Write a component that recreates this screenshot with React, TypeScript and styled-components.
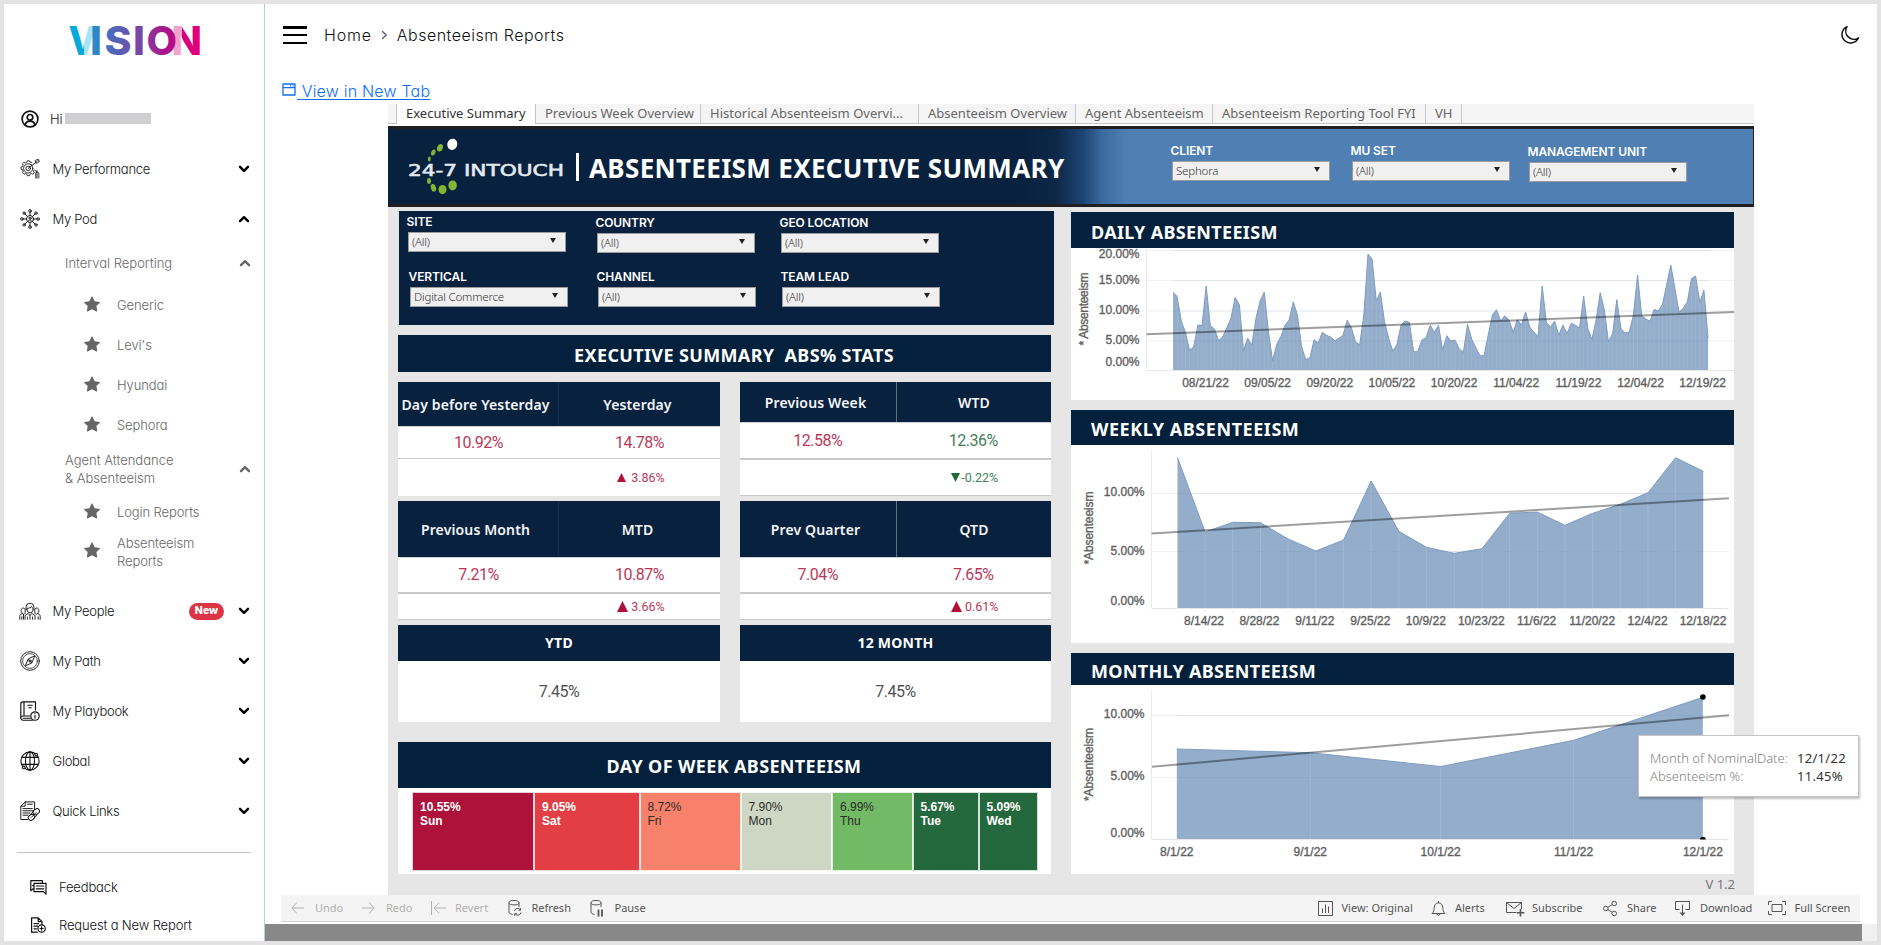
import React from 'react';
import styled, { createGlobalStyle, css } from 'styled-components';

const NAVY = '#08213e';
const DEEP = '#03213c';
const RED = '#b0103a';
const GREEN = '#24693d';
const UI = '"Inter", "Liberation Sans", sans-serif';
const BOOK = '"Noto Sans", "Liberation Sans", sans-serif';
const ARIAL = '"Liberation Sans", Arial, sans-serif';

const GlobalStyle = createGlobalStyle`
  * { box-sizing: border-box; }
  body { margin: 0; background: #e3e3e3; font-family: ${UI}; color: #111; }
`;

/* ---------- page frame ---------- */

const Frame = styled.div`
  display: flex;
  width: 1881px;
  height: 945px;
  border: 4px solid #e3e3e3;
  background: #fff;
  overflow: hidden;
`;

const Sidebar = styled.aside`
  flex: none;
  width: 261px;
  border-right: 1px solid #a5d6e0;
  font-feature-settings: 'cv11';
  font-size: 13px;
  font-weight: 350;
`;

const Main = styled.main`
  flex: 1;
  display: flex;
  flex-direction: column;
  min-width: 0;
`;

/* ---------- sidebar ---------- */

const LogoBox = styled.div`
  height: 90px;
  padding: 10px 0 0 61px;
  svg { display: block; overflow: visible; }
`;

const UserRow = styled.div`
  display: flex;
  align-items: center;
  height: 50px;
  padding-left: 17px;
  svg { margin-right: 11px; }
`;

const Mask = styled.span`
  width: 86px;
  height: 11px;
  margin: -1px 0 0 2px;
  background: #cfcfd1;
`;

const NavRow = styled.div`
  display: flex;
  align-items: center;
  height: 50px;
  padding: 0 14px 0 16px;
`;

const NavLabel = styled.span`
  flex: 1;
  margin-left: 12.5px;
  letter-spacing: -0.28px;
`;

const Badge = styled.span`
  width: 35px;
  height: 17px;
  margin-right: 14px;
  border-radius: 9px;
  background: #dc3545;
  color: #fff;
  font-size: 10.5px;
  font-weight: 800;
  line-height: 16px;
  text-align: center;
`;

const SubRow = styled.div<{ $h: number; $lift?: number }>`
  display: flex;
  align-items: center;
  height: ${p => p.$h}px;
  padding: 0 13px ${p => p.$lift ?? 0}px 61px;
  color: #686868;
  font-weight: 300;
  line-height: 18px;
  span { flex: 1; white-space: pre-line; letter-spacing: 0; }
`;

const LeafRow = styled.div<{ $h?: number; $lift?: number }>`
  display: flex;
  align-items: center;
  height: ${p => p.$h ?? 40}px;
  padding: 0 0 ${p => p.$lift ?? 0}px 80px;
  color: #686868;
  font-weight: 300;
  line-height: 18px;
  letter-spacing: -0.1px;
  white-space: pre-line;
  svg { flex: none; margin: -3px 17px 0 0; }
`;

const Divider = styled.hr`
  width: 234px;
  margin: 16px 0 15px 13px;
  border: 0;
  border-top: 1px solid #c4c4c4;
`;

const FootRow = styled.div`
  display: flex;
  align-items: center;
  height: 38px;
  padding-left: 26px;
  letter-spacing: -0.15px;
  svg { margin-right: 12px; }
`;

/* ---------- main header ---------- */

const TopBar = styled.header`
  display: flex;
  align-items: center;
  height: 62px;
  padding: 0 17px 0 18px;
  font-size: 16px;
  font-weight: 350;
  font-feature-settings: 'cv11';
`;

const Burger = styled.div`
  display: flex;
  flex-direction: column;
  justify-content: space-between;
  width: 24px;
  height: 18px;
  margin-right: 17px;
  i { height: 2.5px; background: #000; }
`;

const Crumb = styled.span<{ $ls?: number }>`
  letter-spacing: ${p => p.$ls ?? 0.5}px;
`;

const TopFill = styled.div`flex: 1;`;

const LinkRow = styled.a`
  display: flex;
  align-items: center;
  height: 38px;
  padding: 12px 0 0 17px;
  color: #0d6efd;
  font-size: 16px;
  font-weight: 350;
  letter-spacing: 0.2px;
  font-feature-settings: 'cv11';
  svg { margin: -3px 1px 0 0; }
  span { white-space: pre; text-decoration: underline; text-underline-offset: 2px; text-decoration-thickness: 1px; }
`;

/* ---------- dashboard ---------- */

const Dashboard = styled.section`
  position: relative;
  width: 1366px;
  height: 791px;
  margin-left: 123px;
  background: #e6e6e6;
  font-family: ${BOOK};
`;

const Tabs = styled.nav`
  display: flex;
  height: 20px;
  background: #f5f5f5;
  border-bottom: 1px solid #c6c6c6;
`;

const TabLead = styled.div`
  width: 9px;
  border-right: 1px solid #c6c6c6;
`;

const Tab = styled.div<{ $w: number; $active?: boolean }>`
  width: ${p => p.$w}px;
  height: 20px;
  padding-left: 9px;
  border-right: 1px solid #c6c6c6;
  color: #666;
  font-size: 13px;
  line-height: 18px;
  white-space: nowrap;
  ${p => p.$active && css`background: #fff; color: #333;`}
`;

const Banner = styled.div`
  display: flex;
  height: 83px;
  padding-top: 2px;
  background: #fff;
`;

const BannerInner = styled.div`
  display: flex;
  flex: 1;
  border: solid #1f1f22;
  border-width: 3px 1px 3px 0;
  background: linear-gradient(90deg, ${NAVY} 632px, #0d2748 668px, #1d4675 696px, #3c6a9f 714px, #4f7fb3 738px);
`;

const BannerLogo = styled.svg`
  flex: none;
  width: 189px;
  height: 75px;
`;

const BannerTitle = styled.h1`
  display: flex;
  align-items: center;
  width: 594px;
  margin: 0;
  padding-top: 2px;
  color: #fff;
  font-size: 26px;
  font-weight: 700;
  letter-spacing: 0.34px;
  white-space: nowrap;
  &::before { content: ''; width: 3px; height: 28px; margin: -1px 10px 0 -1px; background: #fff; }
`;

const Field = styled.div<{ $w: number; $dx?: number; $dy?: number }>`
  width: ${p => p.$w}px;
  padding: ${p => p.$dy ?? 0}px 0 0 ${p => p.$dx ?? 0}px;
`;

const FieldLabel = styled.div`
  margin-left: -1.5px;
  color: #fff;
  font: 600 12px/14px ${UI};
  letter-spacing: -0.1px;
  white-space: nowrap;
`;

const Select = styled.div`
  display: flex;
  align-items: center;
  justify-content: space-between;
  width: 158px;
  height: 20px;
  margin-top: 3px;
  padding: 0 9px 0 3px;
  border: 1px solid #9c9c9c;
  background: #f0f0f0;
  color: #333;
  font-size: 11.5px;
  font-weight: 350;
  letter-spacing: -0.2px;
  line-height: 18px;
  &::after {
    content: '';
    margin-top: -3px;
    border: solid transparent;
    border-width: 5px 3.5px 0;
    border-top-color: #222;
  }
`;

const BannerFields = styled.div`
  display: flex;
  padding-top: 12px;
`;

const Body = styled.div`
  display: flex;
  gap: 17px;
  padding-left: 10px;
`;

const LeftCol = styled.div`
  width: 656px;
  padding-top: 4px;
`;

const FilterPanel = styled.div`
  height: 114px;
  margin: 0 0 10px 1px;
  padding: 4px 0 0 9px;
  background: ${NAVY};
`;

const FieldRow = styled.div`
  display: flex;
  height: 54.5px;
`;

const SectionBar = styled.h2<{ $h: number; $top: number }>`
  display: flex;
  align-items: center;
  justify-content: center;
  width: 653px;
  height: ${p => p.$h}px;
  margin: 0;
  padding: ${p => p.$top}px 0 0 19px;
  background: ${DEEP};
  color: #fff;
  font-size: 18px;
  font-weight: 700;
  letter-spacing: 0.36px;
  white-space: pre;
`;

const StatGrid = styled.div`
  display: grid;
  grid-template-columns: 322px 311px;
  column-gap: 20px;
  margin-top: 10px;
`;

const StatTable = styled.div<{ $rows: string }>`
  display: grid;
  grid-template-rows: ${p => p.$rows};
  margin-bottom: 5px;
  background: #fff;
`;

const StatHead = styled.div<{ $right?: boolean }>`
  display: grid;
  grid-template-columns: ${p => (p.$right ? '157px 154px' : '161px 161px')};
  background: ${NAVY};
  color: #f3f5f8;
  font-size: 14px;
  font-weight: 600;
  letter-spacing: 0.14px;
  white-space: nowrap;
  span { display: flex; align-items: center; justify-content: center; padding: 1px 5px 0 0; }
  span:last-child { padding-right: ${p => (p.$right ? 0 : 4)}px; }
  span:first-child { border-right: 1px solid ${p => (p.$right ? '#5c6d80' : '#16304c')}; }
`;

const StatValues = styled.div<{ $thick?: boolean }>`
  display: grid;
  grid-template-columns: 50% 50%;
  align-items: center;
  border-top: 1px solid #d0d0d0;
  border-bottom: ${p => (p.$thick ? 2 : 1)}px solid #c9c9c9;
`;

const StatDeltas = styled.div<{ $edge?: boolean }>`
  display: grid;
  grid-template-columns: 50% 50%;
  align-items: center;
  border-bottom: ${p => (p.$edge ? '1px solid #c9c9c9' : '0')};
`;

const Value = styled.span<{ $color: string }>`
  color: ${p => p.$color};
  font: 400 16px/20px "Roboto", sans-serif;
  letter-spacing: -0.5px;
  text-align: center;
  opacity: 0.85;
`;

const Delta = styled.span<{ $color: string; $gap: number }>`
  display: flex;
  grid-column: 2;
  align-items: center;
  justify-content: center;
  gap: ${p => p.$gap}px;
  padding-left: 3px;
  color: ${p => p.$color};
  font: 400 12.5px/16px "Roboto", sans-serif;
  b { font-weight: 400; opacity: 0.85; }
`;

const TotalCard = styled.div`
  display: grid;
  grid-template-rows: 36px 61px;
  place-items: center;
  height: 97px;
  background: #fff;
`;

const TotalHead = styled.div`
  width: 100%;
  background: ${NAVY};
  color: #fff;
  font-size: 14px;
  font-weight: 700;
  letter-spacing: 0.25px;
  line-height: 36px;
  text-align: center;
`;

const TotalGrid = styled(StatGrid)`
  margin: 0 0 20px;
`;

const WeekCells = styled.div`
  display: grid;
  grid-template-columns: 122px 105.5px 101px 91.5px 80.5px 66px 59.5px;
  width: 653px;
  height: 86px;
  padding: 4px 13px 3px 14px;
  background: #fff;
`;

const DayCell = styled.div<{ $bg: string; $dark?: boolean }>`
  padding: 7px 0 0 7px;
  border: 1px solid rgba(255, 255, 255, 0.8);
  background: ${p => p.$bg};
  color: ${p => (p.$dark ? '#2c2c28' : '#fff')};
  font: ${p => (p.$dark ? 400 : 700)} 12px/14px ${ARIAL};
`;

const RightCol = styled.div`
  width: 663px;
  padding-top: 5px;
`;

const ChartCard = styled.div`
  margin-bottom: 10px;
  background: #fff;
  svg { display: block; }
`;

const ChartTitle = styled.h2<{ $h: number; $ls?: number }>`
  height: ${p => p.$h}px;
  margin: 0;
  padding: 1.5px 0 0 20px;
  background: ${DEEP};
  color: #fff;
  font-size: 18px;
  font-weight: 700;
  letter-spacing: ${p => p.$ls ?? 0.32}px;
  line-height: ${p => p.$h}px;
`;

const Version = styled.div`
  margin: -10px -1px 0 0;
  color: #777;
  font-size: 13px;
  line-height: 20px;
  text-align: right;
`;

const Tooltip = styled.div`
  position: absolute;
  left: 1250px;
  top: 631px;
  display: grid;
  grid-template-columns: 147px 1fr;
  align-content: center;
  width: 221px;
  height: 62px;
  padding: 1px 0 0 11px;
  border: 1px solid #c4c4c4;
  background: #fff;
  box-shadow: 1px 2px 2px rgba(0, 0, 0, 0.25);
  color: #808080;
  font-size: 13px;
  font-weight: 350;
  line-height: 18px;
  b { color: #333; font-weight: 400; letter-spacing: 0.3px; }
`;

/* ---------- bottom toolbar ---------- */

const Toolbar = styled.footer`
  display: flex;
  justify-content: space-between;
  width: 1579px;
  height: 27px;
  margin-left: 16px;
  padding: 0 0 0 10px;
  border-bottom: 1px solid #cfcfcf;
  background: #f4f4f4;
  font: 400 11px/26px ${BOOK};
`;

const ToolGroup = styled.div`display: flex;`;

const Tool = styled.div<{ $w: number; $slot: number; $off?: boolean }>`
  display: grid;
  grid-template-columns: ${p => p.$slot}px 1fr;
  align-items: center;
  width: ${p => p.$w}px;
  color: ${p => (p.$off ? '#b0b0b0' : '#555')};
  white-space: nowrap;
  svg { display: block; overflow: visible; fill: none; stroke: currentColor; }
`;

const Scroll = styled.div`
  height: 17px;
  margin-top: 2px;
  background: #f0f0f0;
  &::before { content: ''; display: block; width: 1597px; height: 17px; background: #888; }
`;

/* ---------- icons ---------- */

const Line = styled.svg`
  flex: none;
  fill: none;
  stroke: #111;
  stroke-linecap: round;
  stroke-linejoin: round;
`;

const Chevron = ({ up, soft }: { up?: boolean; soft?: boolean }) => (
  <Line width="12" height="8" viewBox="0 0 12 8" strokeWidth="2.4">
    <path d={up ? 'M2 6.2 6 2.2l4 4' : 'M2 1.8l4 4 4-4'} stroke={soft ? '#666' : '#000'} />
  </Line>
);

const Star = () => (
  <svg width="16" height="16" viewBox="0 0 16 16" fill="#666">
    <path d="M3.6 15.4c-.4.2-.8-.1-.7-.6l.8-4.7L.2 6.8c-.3-.3-.2-.9.3-.9l4.9-.7L7.5.8c.2-.4.8-.4 1 0l2.2 4.4 4.9.7c.4 0 .6.6.3.9l-3.5 3.3.8 4.7c.1.5-.3.8-.7.6L8 13.2z" />
  </svg>
);

const UserIcon = () => (
  <Line width="18" height="18" viewBox="0 0 18 18" strokeWidth="1.7">
    <circle cx="9" cy="9" r="7.9" />
    <circle cx="9" cy="7.3" r="2.8" />
    <path d="M4.3 14.6c.6-2.6 2.4-3.4 4.7-3.4s4.1.8 4.7 3.4" />
  </Line>
);

const PerformanceIcon = () => (
  <Line width="20" height="20" viewBox="0 0 20 20" strokeWidth=".85">
    <path d="M11.8 3.4 9.9 3.1 9.4 1.8H7.3l-.5 1.5-1.5.6-1.4-.7-1.4 1.5.7 1.3-.7 1.6-1.5.5v2.1l1.5.5.7 1.6-.7 1.4L4 15.2l1.4-.7 1.5.6.4 1.6h2.1l.5-1.5 1.6-.7 1.3.7 1.4-1.4-.6-1.5.5-1.4" />
    <circle cx="8.2" cy="9.4" r="4.6" />
    <circle cx="8.2" cy="9.4" r="2.3" />
    <path d="m8.2 9.4 9.3-7.2M15.2 2l.4 1.7 1.7.6L19.6 2l-1.5-.2.2-1.5zM10.4 4.9l1.5 1.5M15.6 11.5l1.2 1.8M17 11.9v7.3M15.8 19v-5l1.2-1.6 1.8 1.8V19" />
  </Line>
);

const PodIcon = () => (
  <Line width="20" height="20" viewBox="0 0 20 20" strokeWidth=".95">
    <circle cx="10" cy="10" r="3.5" />
    <circle cx="10" cy="9.2" r="1.1" />
    <path d="M8 12.4c.4-1.9 3.6-1.9 4 0M10 6.4V3.2M10 13.6v3.2M6.4 10H3.2M13.6 10h3.2M7.4 7.4 5 5M12.6 7.4 15 5M7.4 12.6 5 15M12.6 12.6 15 15" />
    <circle cx="10" cy="1.9" r="1.3" /><circle cx="10" cy="18.1" r="1.3" />
    <circle cx="1.9" cy="10" r="1.3" /><circle cx="18.1" cy="10" r="1.3" />
    <circle cx="4.1" cy="4.1" r="1.2" /><circle cx="15.9" cy="4.1" r="1.2" />
    <circle cx="4.1" cy="15.9" r="1.2" /><circle cx="15.9" cy="15.9" r="1.2" />
  </Line>
);

const PeopleSvg = styled(Line)`margin: 0 -1px 0 -1px;`;

const PeopleIcon = () => (
  <PeopleSvg width="22" height="20" viewBox="0 0 22 20" strokeWidth=".9">
    <path d="M7 9V6.2a4 4 0 0 1 8 0V9M8.2 7.3c2.2 0 3.8-.8 4.3-1.8.5 1 1 1.6 1.4 1.8v2.2a2.9 2.9 0 0 1-5.7 0zM6 18.3v-3.2c0-1.4 2-2 3.4-2.4L11 14.5l1.6-1.8c1.4.4 3.4 1 3.4 2.4v3.2M11 14.5v3.8M8.4 16v2.3M13.6 16v2.3" />
    <path d="M2.2 10.8V9.3c0-3 4-3 4 0v2.3c0 2.2-3.4 2.2-3.4 0M3 12.7C1.6 13.2.8 14 .8 15.2v3.1M2.8 15.8v2.5M19.8 10.8V9.3c0-3-4-3-4 0v2.3c0 2.2 3.4 2.2 3.4 0M19 12.7c1.4.5 2.2 1.3 2.2 2.5v3.1M19.2 15.8v2.5M4.5 13.2v5" />
  </PeopleSvg>
);

const PathIcon = () => (
  <Line width="20" height="20" viewBox="0 0 20 20" strokeWidth=".9">
    <circle cx="10" cy="10" r="9.3" />
    <circle cx="10" cy="10" r="7.4" strokeWidth=".7" />
    <path d="m14.6 5.2-2.7 6.7-6.6 3 2.8-6.7zM8.3 8.3l3.5 3.5" />
    <circle cx="10" cy="10" r="1.1" />
  </Line>
);

const PlaybookIcon = () => (
  <Line width="20" height="20" viewBox="0 0 20 20" strokeWidth="1.15">
    <path d="M15.5 9V.9H3A2.2 2.2 0 0 0 .8 3v13.8A2.3 2.3 0 0 0 3 19.2h9.4M.9 16.8C1 15.5 2 15 3 15h7M4 1v14M3.2 17.2h7.5M7.8 4.2h4.5M9 6.7h2.3" />
    <circle cx="15" cy="15" r="4.2" />
    <path d="M15 14.4v2.7M15 12.5v.2" />
  </Line>
);

const GlobeIcon = () => (
  <Line width="20" height="20" viewBox="0 0 20 20" strokeWidth="1.1">
    <circle cx="10" cy="10" r="9.1" />
    <ellipse cx="10" cy="10" rx="4.5" ry="9.1" />
    <path d="M10 1v18M1.8 6.4h16.4M1.8 13.4h16.4" />
    <circle cx="16.2" cy="3.6" r="1.3" fill="#fff" />
    <circle cx="3.8" cy="16.4" r="1.3" fill="#fff" />
  </Line>
);

const LinksIcon = () => (
  <Line width="20" height="20" viewBox="0 0 20 20" strokeWidth=".95">
    <path d="M14.6 8.5V.9H5.2L.8 5.2v13.3h7M5.2.9v4.3H.8M7.5 3.2h4.8M3 7.6h9.4M3 9.8h9.4M3 12h7M3 14.2h5" />
    <rect x="12.8" y="8.2" width="6.9" height="5" rx="2.5" transform="rotate(-35 16.2 10.7)" />
    <rect x="8.2" y="13.8" width="6.6" height="5" rx="2.5" transform="rotate(-35 11.5 16.3)" />
    <path d="m11.3 16.4 4.8-4.9M13.5 17.5l3.6-3.4M10.5 13.4l3.2-3.2" />
  </Line>
);

const FeedbackIcon = () => (
  <Line width="17" height="15" viewBox="0 0 17 15" strokeWidth="1.2">
    <path d="M3.6 8.5.8 10.7V.7h11.6v2.2M4 3.4h12v10.8l-2.6-2.6H4zM6.3 6h7.4M6.3 8.8h7.4M2.6 5.6h1" />
  </Line>
);

const RequestIcon = () => (
  <Line width="17" height="16" viewBox="0 0 17 16" strokeWidth="1.2">
    <path d="M7.2 15.2H1.6V.8h6.6l3.8 3.8v3.2M8.2.8v3.8H12M4 6.6h4.5M4 9.2h3.5M4 11.8h2.4" />
    <circle cx="11.6" cy="11.5" r="3.7" />
    <path d="M11.6 9.9v3.2M10 11.5h3.2" />
  </Line>
);

/* ---------- charts ---------- */

const AxisText = styled.text`
  fill: #616161;
  stroke: #616161;
  stroke-width: 0.35px;
  font: 400 12px ${ARIAL};
`;

type Pt = [number, number];
interface ChartSpec {
  height: number;
  axisX: number;
  top: number;
  base: number;
  right: number;
  grid: number[];
  yLabels: [string, number][];
  xLabels: [string, number][];
  xLabelY: number;
  title: string;
  titleX: number;
  titleY: number;
  pts: Pt[];
  seam: number;
  trend: [Pt, Pt];
  ticks: number[];
  mark?: Pt;
}

function AreaChart(c: ChartSpec) {
  const path = c.pts.map(([x, y]) => `${x.toFixed(1)} ${y.toFixed(1)}`).join('L');
  const first = c.pts[0][0];
  const last = c.pts[c.pts.length - 1][0];
  return (
    <svg width="663" height={c.height} viewBox={`0 0 663 ${c.height}`}>
      <g stroke="#f1f1f1" fill="none">
        {c.grid.map(y => <path key={y} d={`M${c.axisX} ${y}H${c.right}`} />)}
        <path d={`M${c.axisX} ${c.top}V${c.base}`} stroke="#ebebeb" />
        <path d={`M${c.axisX} ${c.base + 0.5}H${c.right}`} stroke="#e6e6e6" />
        {c.ticks.map(x => <path key={x} d={`M${x} ${c.base}v5`} />)}
      </g>
      <path d={`M${first} ${c.base}L${path}L${last.toFixed(1)} ${c.base}Z`} fill="#94adcb" />
      <g stroke="#fff" strokeOpacity={c.seam}>
        {c.pts.map(([x, y]) => <path key={x} d={`M${x} ${y + 1}V${c.base}`} />)}
      </g>
      <g stroke="#5b7fae" strokeOpacity=".1">
        {c.grid.map(y => <path key={y} d={`M${first} ${y}H${last}`} />)}
      </g>
      <path d={`M${path}`} fill="none" stroke="#7f9dc1" strokeWidth="1" />
      <path d={`M${c.trend[0].join(' ')}L${c.trend[1].join(' ')}`} stroke="#000" strokeOpacity=".38" strokeWidth="2" />
      {c.mark && (
        <g fill="#000">
          <circle cx={c.mark[0]} cy={c.mark[1]} r="2.8" />
          <path d={`M${c.mark[0] - 2.8} ${c.base + 0.5}a2.8 2.8 0 0 1 5.6 0z`} />
        </g>
      )}
      {c.yLabels.map(([t, y]) => <AxisText key={t} x={c.axisX - 7} y={y + 4.3} textAnchor="end">{t}</AxisText>)}
      {c.xLabels.map(([t, x]) => <AxisText key={t} x={x} y={c.xLabelY + 4.3} textAnchor="middle">{t}</AxisText>)}
      <AxisText textAnchor="middle" textLength="73" transform={`translate(${c.titleX + 4} ${c.titleY}) rotate(-90)`}>{c.title}</AxisText>
    </svg>
  );
}

// One sample per day from 08/13/22, as depth below the plot's origin in thirds of a pixel.
const DAILY = [
  262, 274, 348, 382, 436, 425, 360, 362, 243, 362, 372, 407, 395, 368, 338, 277, 300, 437, 400, 420,
  340, 288, 261, 380, 467, 418, 395, 360, 345, 290, 330, 425, 463, 460, 404, 414, 382, 391, 396, 407,
  400, 390, 346, 368, 410, 419, 330, 147, 162, 288, 261, 350, 400, 438, 418, 360, 348, 352, 440, 440,
  405, 398, 361, 382, 361, 435, 392, 408, 405, 432, 442, 358, 402, 428, 452, 452, 390, 330, 314, 348,
  332, 345, 382, 344, 360, 321, 366, 382, 394, 243, 352, 366, 348, 390, 360, 385, 355, 361, 369, 274,
  370, 403, 345, 263, 315, 411, 385, 284, 372, 384, 381, 330, 210, 332, 342, 349, 313, 318, 298, 240,
  180, 250, 322, 310, 290, 220, 213, 292, 255, 400,
];
const WEEKLY = [172, 396, 367, 368, 417, 453, 420, 243, 394, 442, 460, 446, 340, 336, 376, 340, 313, 278, 173, 214];

const dailyDates = ['08/21/22', '09/05/22', '09/20/22', '10/05/22', '10/20/22', '11/04/22', '11/19/22', '12/04/22', '12/19/22'];
const weeklyDates = ['8/14/22', '8/28/22', '9/11/22', '9/25/22', '10/9/22', '10/23/22', '11/6/22', '11/20/22', '12/4/22', '12/18/22'];

const daily: ChartSpec = {
  height: 152, axisX: 75.5, top: 2, base: 122, right: 663,
  grid: [2.5, 32.5, 63, 93],
  yLabels: [['20.00%', 6], ['15.00%', 31.5], ['10.00%', 62], ['5.00%', 92], ['0.00%', 114]],
  xLabels: dailyDates.map((d, i) => [d, 134.5 + i * 62.15]),
  xLabelY: 135,
  title: '* Absenteeism', titleX: 12.5, titleY: 61,
  pts: DAILY.map((s, i) => [102 + i * 4.148, s / 3 - 43]),
  seam: 0.1,
  trend: [[75.5, 86.3], [663, 64]],
  ticks: dailyDates.map((_, i) => 134.5 + i * 62.15),
};

const weekly: ChartSpec = {
  height: 198, axisX: 80.5, top: 5, base: 163, right: 658,
  grid: [48.5, 106.5],
  yLabels: [['10.00%', 46.5], ['5.00%', 105.5], ['0.00%', 155.5]],
  xLabels: weeklyDates.map((d, i) => [d, 133 + i * 55.45]),
  xLabelY: 176,
  title: '*Absenteeism', titleX: 18, titleY: 83,
  pts: WEEKLY.map((s, i) => [106.4 + i * 27.68, s / 3 - 45]),
  seam: 0.14,
  trend: [[80.5, 88.5], [658, 53.3]],
  ticks: WEEKLY.map((_, i) => 106.4 + i * 27.68),
};

const monthX = [105.8, 239.3, 369.6, 502.6, 631.9];
const monthly: ChartSpec = {
  height: 189, axisX: 80.5, top: 5, base: 154, right: 658,
  grid: [30.5, 92.5],
  yLabels: [['10.00%', 28.5], ['5.00%', 91], ['0.00%', 147.5]],
  xLabels: ['8/1/22', '9/1/22', '10/1/22', '11/1/22', '12/1/22'].map((d, i) => [d, monthX[i]]),
  xLabelY: 167,
  title: '*Absenteeism', titleX: 17.5, titleY: 79.5,
  pts: [64, 67.7, 81.5, 55.3, 12.3].map((y, i) => [monthX[i], y]),
  seam: 0.14,
  trend: [[81, 81.8], [658, 30.3]],
  ticks: monthX,
  mark: [631.9, 12],
};

/* ---------- pieces ---------- */

const LogoLetter = styled.text`
  font: 800 39.5px "Inter", sans-serif;
`;

const VisionLogo = () => (
  <svg width="146" height="56" viewBox="-4 -11 146 56">
    <defs>
      <linearGradient id="vis" gradientUnits="userSpaceOnUse" x1="0" y1="0" x2="131" y2="0">
        <stop offset="0" stopColor="#00acd8" />
        <stop offset=".2" stopColor="#2f87c6" />
        <stop offset=".36" stopColor="#5563b8" />
        <stop offset=".55" stopColor="#7a45a2" />
        <stop offset=".76" stopColor="#b00f88" />
        <stop offset=".9" stopColor="#d9007c" />
        <stop offset="1" stopColor="#e5007a" />
      </linearGradient>
      <linearGradient id="vee" x1="0" y1="0" x2="1" y2="0">
        <stop offset=".54" stopColor="#06a9d8" />
        <stop offset=".56" stopColor="#a5e4f2" />
      </linearGradient>
      <linearGradient id="en" x1="0" y1="0" x2="1" y2="0">
        <stop offset=".34" stopColor="#efa3cd" />
        <stop offset=".36" stopColor="#d4007f" />
        <stop offset="1" stopColor="#e5007a" />
      </linearGradient>
    </defs>
    <LogoLetter x="-.5" y="29.5" fill="url(#vee)" textLength="28" lengthAdjust="spacingAndGlyphs">V</LogoLetter>
    <LogoLetter x="21" y="29.5" fill="url(#vis)" textLength="12" lengthAdjust="spacingAndGlyphs">I</LogoLetter>
    <LogoLetter x="35.5" y="29.5" fill="url(#vis)" textLength="27" lengthAdjust="spacingAndGlyphs">S</LogoLetter>
    <LogoLetter x="64" y="29.5" fill="url(#vis)" textLength="12" lengthAdjust="spacingAndGlyphs">I</LogoLetter>
    <LogoLetter x="102.5" y="29.5" fill="url(#en)" textLength="30.5" lengthAdjust="spacingAndGlyphs">N</LogoLetter>
    <LogoLetter x="77.5" y="29.5" fill="url(#vis)" textLength="30.5" lengthAdjust="spacingAndGlyphs">O</LogoLetter>
  </svg>
);

const IntouchLogo = () => (
  <BannerLogo viewBox="388 129 189 75">
    <ellipse cx="452.3" cy="144.3" rx="5" ry="5.7" fill="#fff" transform="rotate(15 452.3 144.3)" />
    <g fill="#86b535">
      <ellipse cx="440" cy="147.8" rx="2.8" ry="3.8" transform="rotate(25 440 147.8)" />
      <ellipse cx="433.3" cy="152.6" rx="2" ry="3.1" transform="rotate(25 433.3 152.6)" />
      <ellipse cx="429.3" cy="159" rx="1.4" ry="2.6" />
      <ellipse cx="429" cy="181" rx="1.9" ry="3" />
      <ellipse cx="433.4" cy="187.8" rx="2.6" ry="3.9" transform="rotate(-15 433.4 187.8)" />
      <ellipse cx="442.5" cy="189.6" rx="4" ry="4.6" />
      <ellipse cx="452.6" cy="185.4" rx="4.2" ry="5" />
    </g>
    <text x="408" y="176" fill="#e4e9ef" stroke="#e4e9ef" strokeWidth=".6" fontFamily="'DejaVu Sans', sans-serif" fontSize="16.5" textLength="156" lengthAdjust="spacingAndGlyphs">24-7 INTOUCH</text>
  </BannerLogo>
);

const Filter = ({ label, value = '(All)', w, dx, dy }: { label: string; value?: string; w: number; dx?: number; dy?: number }) => (
  <Field $w={w} $dx={dx} $dy={dy}>
    <FieldLabel>{label}</FieldLabel>
    <Select>{value}</Select>
  </Field>
);

const Triangle = ({ size, down }: { size: number; down?: boolean }) => (
  <svg width={size} height={size} viewBox="0 0 10 10" fill="currentColor">
    <path d={down ? 'M0 0h10L5 10z' : 'M0 10h10L5 0z'} />
  </svg>
);

interface StatProps {
  rows: string;
  heads: [string, string];
  values: [string, string];
  delta: string;
  color?: string;
  right?: boolean;
  mark: number;
  gap: number;
  thick?: boolean;
  edge?: boolean;
  down?: boolean;
}

const Stat = (s: StatProps) => (
  <StatTable $rows={s.rows}>
    <StatHead $right={s.right}><span>{s.heads[0]}</span><span>{s.heads[1]}</span></StatHead>
    <StatValues $thick={s.thick}>
      <Value $color={RED}>{s.values[0]}</Value>
      <Value $color={s.color ?? RED}>{s.values[1]}</Value>
    </StatValues>
    <StatDeltas $edge={s.edge}>
      <Delta $color={s.color ?? RED} $gap={s.gap}><Triangle size={s.mark} down={s.down} /><b>{s.delta}</b></Delta>
    </StatDeltas>
  </StatTable>
);

const days: [string, string, string, boolean][] = [
  ['10.55%', 'Sun', '#ae123a', false],
  ['9.05%', 'Sat', '#e33e43', false],
  ['8.72%', 'Fri', '#f8816b', true],
  ['7.90%', 'Mon', '#ced7c3', true],
  ['6.99%', 'Thu', '#73ba67', true],
  ['5.67%', 'Tue', '#24693d', false],
  ['5.09%', 'Wed', '#24693d', false],
];

const tabs: [string, number][] = [
  ['Executive Summary', 139],
  ['Previous Week Overview', 165],
  ['Historical Absenteeism Overvi...', 218],
  ['Absenteeism Overview', 157],
  ['Agent Absenteeism', 137],
  ['Absenteeism Reporting Tool FYI', 213],
  ['VH', 36],
];

const lowerNav: [string, () => React.ReactElement][] = [
  ['My Path', PathIcon],
  ['My Playbook', PlaybookIcon],
  ['Global', GlobeIcon],
  ['Quick Links', LinksIcon],
];

export default function App() {
  return (
    <>
      <GlobalStyle />
      <Frame>
        <Sidebar>
          <LogoBox><VisionLogo /></LogoBox>
          <UserRow><UserIcon />Hi<Mask /></UserRow>
          <NavRow><PerformanceIcon /><NavLabel>My Performance</NavLabel><Chevron /></NavRow>
          <NavRow><PodIcon /><NavLabel>My Pod</NavLabel><Chevron up /></NavRow>
          <SubRow $h={41} $lift={4}><span>Interval Reporting</span><Chevron up soft /></SubRow>
          <LeafRow><Star />Generic</LeafRow>
          <LeafRow><Star />Levi's</LeafRow>
          <LeafRow><Star />Hyundai</LeafRow>
          <LeafRow><Star />Sephora</LeafRow>
          <SubRow $h={47}><span>{'Agent Attendance\n& Absenteeism'}</span><Chevron up soft /></SubRow>
          <LeafRow><Star />Login Reports</LeafRow>
          <LeafRow $h={54} $lift={15}><Star />{'Absenteeism\nReports'}</LeafRow>
          <NavRow><PeopleIcon /><NavLabel>My People</NavLabel><Badge>New</Badge><Chevron /></NavRow>
          {lowerNav.map(([label, Icon]) => (
            <NavRow key={label}><Icon /><NavLabel>{label}</NavLabel><Chevron /></NavRow>
          ))}
          <Divider />
          <FootRow><FeedbackIcon />Feedback</FootRow>
          <FootRow><RequestIcon />Request a New Report</FootRow>
        </Sidebar>

        <Main>
          <TopBar>
            <Burger><i /><i /><i /></Burger>
            <Crumb $ls={0.8}>Home</Crumb>
            <Line width="25" height="10" viewBox="0 0 25 10" strokeWidth="1.2"><path d="m10.5 1.5 3.8 3.5-3.8 3.5" stroke="#555" /></Line>
            <Crumb>Absenteeism Reports</Crumb>
            <TopFill />
            <Line width="20" height="20" viewBox="0 0 20 20" strokeWidth="1.5">
              <path d="M7 1.6a8.6 8.6 0 1 0 11.5 11.2A8.2 8.2 0 0 1 7 1.6z" />
            </Line>
          </TopBar>
          <LinkRow>
            <Line width="14" height="13" viewBox="0 0 14 13" strokeWidth="1.3">
              <path d="M1 1h12v11H1zM1 4.6h12M8.5 2.8h.2M11 2.8h.2" stroke="#0d6efd" />
            </Line>
            <span> View in New Tab</span>
          </LinkRow>

          <Dashboard>
            <Tabs>
              <TabLead />
              {tabs.map(([t, w], i) => <Tab key={t} $w={w} $active={i === 0}>{t}</Tab>)}
            </Tabs>
            <Banner>
              <BannerInner>
                <IntouchLogo />
                <BannerTitle>ABSENTEEISM EXECUTIVE SUMMARY</BannerTitle>
                <BannerFields>
                  <Filter label="CLIENT" value="Sephora" w={180} dx={1} dy={3} />
                  <Filter label="MU SET" w={177} dx={1} dy={3} />
                  <Filter label="MANAGEMENT UNIT" w={165} dx={1} dy={4} />
                </BannerFields>
              </BannerInner>
            </Banner>

            <Body>
              <LeftCol>
                <FilterPanel>
                  <FieldRow>
                    <Filter label="SITE" w={189} />
                    <Filter label="COUNTRY" w={184} dy={1} />
                    <Filter label="GEO LOCATION" w={160} dy={1} />
                  </FieldRow>
                  <FieldRow>
                    <Filter label="VERTICAL" value="Digital Commerce" w={189} dx={2} />
                    <Filter label="CHANNEL" w={184} dx={1} />
                    <Filter label="TEAM LEAD" w={160} dx={1} />
                  </FieldRow>
                </FilterPanel>
                <SectionBar $h={37} $top={3}>{'EXECUTIVE SUMMARY  ABS% STATS'}</SectionBar>
                <StatGrid>
                  <Stat rows="44px 33px 37px" heads={['Day before Yesterday', 'Yesterday']} values={['10.92%', '14.78%']} delta="3.86%" mark={9} gap={5} />
                  <Stat rows="40px 38px 36px" heads={['Previous Week', 'WTD']} values={['12.58%', '12.36%']} delta="-0.22%" mark={9} gap={1} color={GREEN} right thick edge down />
                  <Stat rows="56px 37px 26px" heads={['Previous Month', 'MTD']} values={['7.21%', '10.87%']} delta="3.66%" mark={11} gap={3} thick edge />
                  <Stat rows="56px 37px 26px" heads={['Prev Quarter', 'QTD']} values={['7.04%', '7.65%']} delta="0.61%" mark={11} gap={3} right thick edge />
                </StatGrid>
                <TotalGrid>
                  <TotalCard><TotalHead>YTD</TotalHead><Value $color="#333">7.45%</Value></TotalCard>
                  <TotalCard><TotalHead>12 MONTH</TotalHead><Value $color="#333">7.45%</Value></TotalCard>
                </TotalGrid>
                <SectionBar $h={46} $top={1}>DAY OF WEEK ABSENTEEISM</SectionBar>
                <WeekCells>
                  {days.map(([v, d, bg, dark]) => <DayCell key={d} $bg={bg} $dark={dark}>{v}<br />{d}</DayCell>)}
                </WeekCells>
              </LeftCol>

              <RightCol>
                <ChartCard><ChartTitle $h={36}>DAILY ABSENTEEISM</ChartTitle><AreaChart {...daily} /></ChartCard>
                <ChartCard><ChartTitle $h={35} $ls={0.55}>WEEKLY ABSENTEEISM</ChartTitle><AreaChart {...weekly} /></ChartCard>
                <ChartCard><ChartTitle $h={32}>MONTHLY ABSENTEEISM</ChartTitle><AreaChart {...monthly} /></ChartCard>
                <Version>V 1.2</Version>
              </RightCol>
            </Body>

            <Tooltip>
              <span>Month of NominalDate:</span><b>12/1/22</b>
              <span>Absenteeism %:</span><b>11.45%</b>
            </Tooltip>
          </Dashboard>

          <Toolbar>
            <ToolGroup>
              <Tool $w={71} $slot={24} $off><svg width="13" height="12"><path d="M13 6H1M6 .5.8 6 6 11.5" /></svg>Undo</Tool>
              <Tool $w={69} $slot={24} $off><svg width="13" height="12"><path d="M0 6h12M7 .5 12.2 6 7 11.5" /></svg>Redo</Tool>
              <Tool $w={77} $slot={24} $off><svg width="15" height="14"><path d="M.5 0v14M15 7H3M8 1.8 3 7l5 5.2" /></svg>Revert</Tool>
              <Tool $w={82} $slot={23.5}>
                <svg width="14" height="16"><ellipse cx="6" cy="2.7" rx="5" ry="2.2" /><path d="M1 2.7v9.6c0 1 1.6 1.9 3.6 2.1M11 2.7V7M6.5 11a3.2 3.2 0 0 1 5.8-1.2M12.6 8v2.2h-2.2M13 12.5a3.2 3.2 0 0 1-5.8 1.3M6.8 15.8v-2.2H9" /></svg>Refresh
              </Tool>
              <Tool $w={60} $slot={24.5}>
                <svg width="14" height="16"><ellipse cx="6" cy="2.7" rx="5" ry="2.2" /><path d="M1 2.7v9.6c0 1 1.6 1.9 3.6 2.1M11 2.7V7" /><path d="M8.5 9.5v7M12 9.5v7" strokeWidth="1.8" /></svg>Pause
              </Tool>
            </ToolGroup>
            <ToolGroup>
              <Tool $w={112.5} $slot={23.5}><svg width="15" height="15"><path d="M.5.5h14v14H.5zM4.5 12V7.5M7.5 12V3.5M10.5 12V5.5" /></svg>View: Original</Tool>
              <Tool $w={75.5} $slot={24.5}><svg width="15" height="15"><path d="M1 12.5c1.8-1.4 2-3.4 2.2-6C3.4 3.6 5 1.8 7.5 1.8s4.1 1.8 4.3 4.7c.2 2.6.4 4.6 2.2 6zM7.5 1.8V0M6 13c.2 1.8 2.8 1.8 3 0" /></svg>Alerts</Tool>
              <Tool $w={97} $slot={26}><svg width="19" height="15"><path d="M10.5 11.5H.5v-10h15v6.5M.5 1.5l7.5 6 7.5-6" /><path d="M14.5 8v7.5M10.8 11.7h7.6" strokeWidth="1.6" /></svg>Subscribe</Tool>
              <Tool $w={71.5} $slot={24}><svg width="15" height="15"><circle cx="2.8" cy="7.5" r="2.3" /><circle cx="11.2" cy="2.5" r="2.3" /><circle cx="11.2" cy="12.5" r="2.3" /><path d="m4.8 6.3 4.4-2.6M4.8 8.7l4.4 2.6" /></svg>Share</Tool>
              <Tool $w={93.5} $slot={25.5}><svg width="15" height="15"><path d="M4.5 8.5h-4v-8h14v8h-4M7.5 3.5v9" /><path d="M4.5 11.5h6l-3 3.5z" fill="currentColor" stroke="none" /></svg>Download</Tool>
              <Tool $w={92} $slot={26.5}><svg width="18" height="14"><path d="M4 .5H.5V4M14 .5h3.5V4M4 13.5H.5V10M14 13.5h3.5V10M4 3.5h10v7H4z" /></svg>Full Screen</Tool>
            </ToolGroup>
          </Toolbar>
          <Scroll />
        </Main>
      </Frame>
    </>
  );
}
